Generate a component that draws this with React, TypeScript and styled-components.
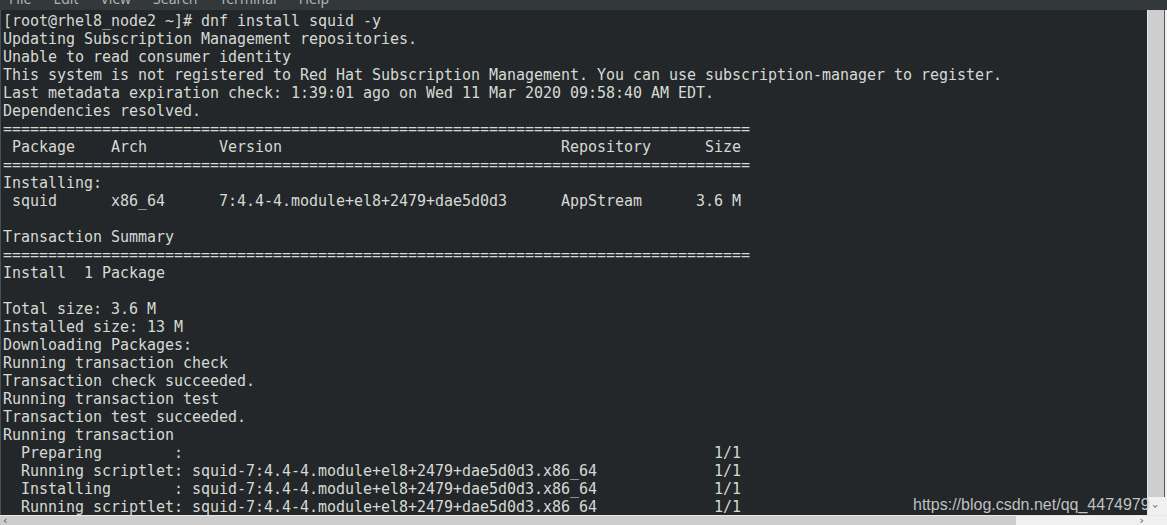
import { createGlobalStyle, styled } from "styled-components"

const GlobalStyle = createGlobalStyle`
  html, body {
    margin: 0;
    padding: 0;
    background: #ededed;
  }
`

const Window = styled.div`
  width: 1167px;
  height: 525px;
  display: flex;
  flex-direction: column;
  overflow: hidden;
  position: relative;
`

const MenuBar = styled.div`
  height: 10px;
  flex: none;
  background: #33393b;
  overflow: hidden;
  display: flex;
  gap: 22px;
  padding-left: 9px;
`

const MenuItem = styled.span`
  font-family: "Noto Sans", sans-serif;
  font-size: 14px;
  line-height: 14px;
  color: #aeb3b4;
  margin-top: -8px;
`

const Body = styled.div`
  flex: 1;
  display: flex;
  min-height: 0;
`

const Terminal = styled.div`
  flex: 1;
  background: #232729;
  border-left: 1px solid #4a4f51;
  padding: 2px 0 0 2px;
  overflow: hidden;
`

const Line = styled.div`
  font-family: "DejaVu Sans Mono", monospace;
  font-size: 15px;
  letter-spacing: -0.03px;
  line-height: 18px;
  height: 18px;
  white-space: pre;
  color: #d6d9d4;
`

const VScroll = styled.div`
  width: 19px;
  flex: none;
  background: #f0f0f0;
  border-left: 1px solid #e6e6e6;
  display: flex;
  flex-direction: column;
  position: relative;
`

const VThumb = styled.div`
  width: 16px;
  height: 487px;
  background: #cecece;
  border-right: 1px solid #5a5a5a;
`

const ArrowGlyph = styled.span<{ $dir: "down" | "left" | "right" }>`
  position: absolute;
  font-family: "DejaVu Sans", sans-serif;
  font-size: 11px;
  line-height: 11px;
  color: #555;
  ${({ $dir }) =>
    $dir === "down"
      ? "left: 5px; bottom: 3px; transform: rotate(90deg);"
      : $dir === "left"
      ? "left: 3px; top: -1px;"
      : "right: 23px; top: -1px;"}
`

const HScroll = styled.div`
  height: 9px;
  flex: none;
  background: #f0f0f0;
  border-top: 1px solid #e8e8e8;
  display: flex;
  position: relative;
`

const HThumb = styled.div`
  width: 1016px;
  background: #cdcdcd;
`

const Watermark = styled.div`
  position: absolute;
  left: 913px;
  top: 496px;
  font-family: "Liberation Sans", Arial, sans-serif;
  font-size: 16px;
  line-height: 18px;
  color: rgba(225, 225, 225, 0.85);
  text-shadow: 0 0 1px rgba(0, 0, 0, 0.35);
  white-space: nowrap;
`

// place pieces of text at fixed terminal columns
const cols = (parts: [string, number][]) =>
  parts.reduce((line, [text, col]) => line.padEnd(col) + text, "")

const rule = "=".repeat(83)
const pkg = "squid-7:4.4-4.module+el8+2479+dae5d0d3.x86_64"

const lines = [
  "[root@rhel8_node2 ~]# dnf install squid -y",
  "Updating Subscription Management repositories.",
  "Unable to read consumer identity",
  "This system is not registered to Red Hat Subscription Management. You can use subscription-manager to register.",
  "Last metadata expiration check: 1:39:01 ago on Wed 11 Mar 2020 09:58:40 AM EDT.",
  "Dependencies resolved.",
  rule,
  cols([["Package", 1], ["Arch", 12], ["Version", 24], ["Repository", 62], ["Size", 78]]),
  rule,
  "Installing:",
  cols([["squid", 1], ["x86_64", 12], ["7:4.4-4.module+el8+2479+dae5d0d3", 24], ["AppStream", 62], ["3.6 M", 77]]),
  "",
  "Transaction Summary",
  rule,
  "Install  1 Package",
  "",
  "Total size: 3.6 M",
  "Installed size: 13 M",
  "Downloading Packages:",
  "Running transaction check",
  "Transaction check succeeded.",
  "Running transaction test",
  "Transaction test succeeded.",
  "Running transaction",
  cols([["Preparing", 2], [":", 19], ["1/1", 79]]),
  cols([["Running scriptlet:", 2], [pkg, 21], ["1/1", 79]]),
  cols([["Installing", 2], [":", 19], [pkg, 21], ["1/1", 79]]),
  cols([["Running scriptlet:", 2], [pkg, 21], ["1/1", 79]]),
]

const menu = ["File", "Edit", "View", "Search", "Terminal", "Help"]

export default function App() {
  return (
    <>
      <GlobalStyle />
      <Window>
        <MenuBar>
          {menu.map((m) => (
            <MenuItem key={m}>{m}</MenuItem>
          ))}
        </MenuBar>
        <Body>
          <Terminal>
            {lines.map((l, i) => (
              <Line key={i}>{l}</Line>
            ))}
          </Terminal>
          <VScroll>
            <VThumb />
            <ArrowGlyph $dir="down">›</ArrowGlyph>
          </VScroll>
        </Body>
        <HScroll>
          <HThumb />
          <ArrowGlyph $dir="left">‹</ArrowGlyph>
          <ArrowGlyph $dir="right">›</ArrowGlyph>
        </HScroll>
        <Watermark>https://blog.csdn.net/qq_4474979</Watermark>
      </Window>
    </>
  )
}
